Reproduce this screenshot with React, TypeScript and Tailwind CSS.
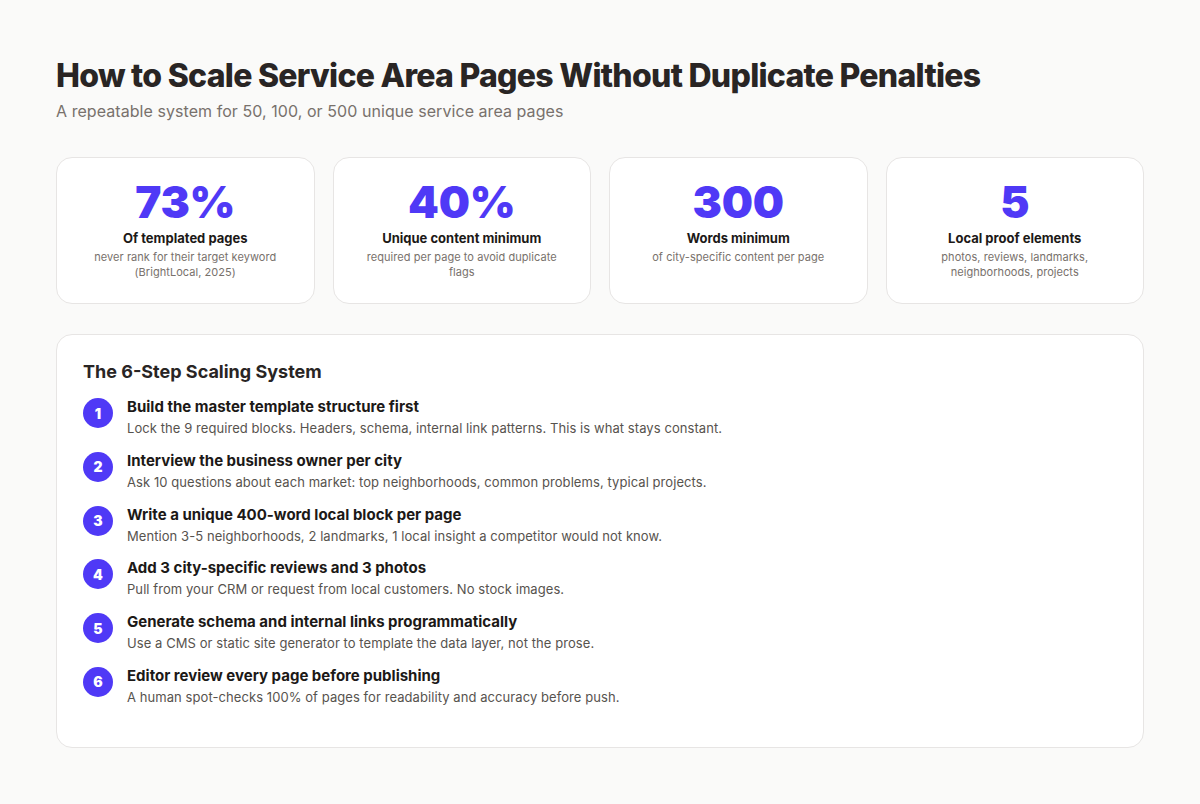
const stats = [
  { value: "73%", label: "Of templated pages", note: "never rank for their target keyword (BrightLocal, 2025)" },
  { value: "40%", label: "Unique content minimum", note: "required per page to avoid duplicate flags" },
  { value: "300", label: "Words minimum", note: "of city-specific content per page" },
  { value: "5", label: "Local proof elements", note: "photos, reviews, landmarks, neighborhoods, projects" },
];

const steps = [
  { title: "Build the master template structure first", text: "Lock the 9 required blocks. Headers, schema, internal link patterns. This is what stays constant." },
  { title: "Interview the business owner per city", text: "Ask 10 questions about each market: top neighborhoods, common problems, typical projects." },
  { title: "Write a unique 400-word local block per page", text: "Mention 3-5 neighborhoods, 2 landmarks, 1 local insight a competitor would not know." },
  { title: "Add 3 city-specific reviews and 3 photos", text: "Pull from your CRM or request from local customers. No stock images." },
  { title: "Generate schema and internal links programmatically", text: "Use a CMS or static site generator to template the data layer, not the prose." },
  { title: "Editor review every page before publishing", text: "A human spot-checks 100% of pages for readability and accuracy before push." },
];

export default function App() {
  return (
    <div className="min-h-[804px] bg-[#fafaf9] px-14 pt-[56px] font-['Inter',sans-serif]">
      <h1 className="text-[32px] leading-[40px] font-extrabold tracking-[-0.72px] text-[#292524]">
        How to Scale Service Area Pages Without Duplicate Penalties
      </h1>
      <p className="mt-[6px] text-base leading-[19px] tracking-[0.06px] text-[#78716c]">
        A repeatable system for 50, 100, or 500 unique service area pages
      </p>

      <div className="mt-9 grid grid-cols-4 gap-[18px]">
        {stats.map((s) => (
          <div key={s.label} className="h-[147px] rounded-2xl border border-[#e7e5e4] bg-white px-5 pt-5 text-center">
            <div className="text-[44px] leading-[48px] font-black tracking-[-0.2px] text-[#4f39f6]">{s.value}</div>
            <div className="mt-[4px] text-[13px] leading-[16px] font-bold text-[#1c1917]">{s.label}</div>
            <div className="mt-[4px] text-[11px] leading-[15px] tracking-[0.05px] text-[#78716c]">{s.note}</div>
          </div>
        ))}
      </div>

      <div className="mt-[30px] h-[414px] rounded-2xl border border-[#e7e5e4] bg-white px-[26px] pt-[26px]">
        <h2 className="text-lg leading-[22px] font-bold text-[#292524]">The 6-Step Scaling System</h2>
        <div className="mt-[14px] flex flex-col gap-[12.8px]">
          {steps.map((s, i) => (
            <div key={s.title} className="flex gap-[14px]">
              <div className="mt-[1px] flex h-[30px] w-[30px] shrink-0 items-center justify-center rounded-full bg-[#4f39f6] text-[14px] font-black text-white">
                {i + 1}
              </div>
              <div>
                <div className="text-[15px] leading-[20px] font-bold text-[#1c1917]">{s.title}</div>
                <div className="mt-[1px] text-[13px] leading-[20px] tracking-[0.07px] text-[#57534e]">{s.text}</div>
              </div>
            </div>
          ))}
        </div>
      </div>
    </div>
  );
}
